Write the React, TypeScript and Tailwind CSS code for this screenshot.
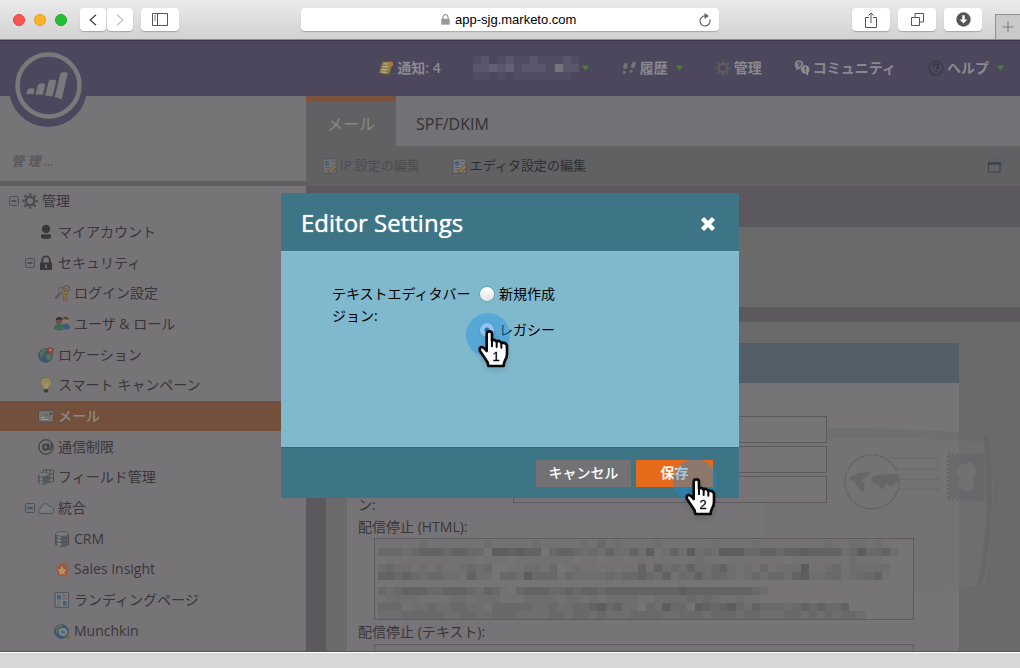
import { useState } from "react";
import type { ReactNode } from "react";

/* ---------- pixelated private text ---------- */

const TINTS = ["none", "#737173", "#6e6d6f", "#69686a", "#636264", "#5e5c5f"];

const BODY_ROWS = [
  "1111121111111211111211111213121111211111121111211111111211221210",
  "3332344434433055454403443232422425124252325553344344544442353342",
  "0111111111110111011111110110110111111112110111111101111111211100",
  "2322121211232300112213012111111141423242234212131222511231222220",
  "4434323322142203325333132222323343241324233212323324522331233410",
  "0000000000000000000000000000000000000000000000000000000000000000",
  "3234443344432431034443343443444444444544444444320000000000000000",
  "1222211112212221112222122121222211222232321121100000000000000000",
  "3331223223322133333223223345342203253315434532433323434334000000",
  "2223333322332233322223323323222333322333233323322233232323320000",
];

const NAV_TINTS = ["none", "#524d63", "#5b566b", "#656175", "#757281"];
const NAV_ROWS = ["1201211211121", "2232312221422", "1101011111110"];

function Mosaic({ rows, tints, className }: { rows: string[]; tints: string[]; className: string }) {
  const columns = rows[0].length;
  return (
    <svg
      className={className}
      viewBox={`0 0 ${columns} ${rows.length}`}
      preserveAspectRatio="none"
      shapeRendering="crispEdges"
      aria-hidden="true"
    >
      {rows.flatMap((row, y) =>
        [...row].map((level, x) =>
          level === "0" ? null : (
            <rect key={`${x}-${y}`} x={x} y={y} width="1" height="1" fill={tints[Number(level)]} />
          ),
        ),
      )}
    </svg>
  );
}

/* ---------- icons ---------- */

function Icon({ children, className = "size-4" }: { children: ReactNode; className?: string }) {
  return (
    <svg className={`${className} shrink-0`} viewBox="0 0 16 16" fill="none" aria-hidden="true">
      {children}
    </svg>
  );
}

const GearIcon = ({ color }: { color: string }) => (
  <Icon>
    <circle cx="8" cy="8" r="4.3" stroke={color} strokeWidth="2.6" />
    <circle cx="8" cy="8" r="6.7" stroke={color} strokeWidth="2.2" strokeDasharray="2.6 2.66" strokeDashoffset="1.3" />
  </Icon>
);

const UserIcon = () => (
  <Icon>
    <circle cx="8" cy="5" r="4.2" fill="#38383b" />
    <path d="M3 11c1.5-1.2 2.8-.5 5-.5s3.5-.7 5 .5v3q-5 2.200-10 0z" fill="#38383b" />
  </Icon>
);

const LockIcon = () => (
  <Icon>
    <path d="M4.2 8V5.200a3.800 3.800 0 0 1 7.600 0V8" stroke="#38383b" strokeWidth="1.8" />
    <rect x="2" y="7.500" width="12" height="7.500" rx=".8" fill="#38383b" />
    <path d="M7.200 9.500h1.600v3.500H7.200z" fill="#777478" />
  </Icon>
);

const KeysIcon = () => (
  <Icon>
    <path d="M1 13.500 7 7.500" stroke="#55565b" strokeWidth="1.8" />
    <path d="m2 12.500 1.800 1.400M4 10.500l1.500 1.200" stroke="#55565b" />
    <circle cx="7" cy="5" r="2.800" stroke="#66676b" strokeWidth="1.5" />
    <circle cx="12.500" cy="3.500" r="3" stroke="#505256" />
    <circle cx="11" cy="6.500" r="2.900" fill="#92754b" stroke="#5b4a34" strokeWidth=".6" />
    <path d="M10 9h2.400v6.500h-3.200V14h1v-1.300h-1v-1.200H10z" fill="#92754b" stroke="#5b4a34" strokeWidth=".5" />
    <circle cx="11" cy="5.800" r=".9" fill="#4b4032" />
  </Icon>
);

const UsersIcon = () => (
  <Icon>
    <circle cx="11.500" cy="4.300" r="3.200" fill="#8f7a63" />
    <path d="M8.400 3.500q.5-3 3.400-2.800 3.200.2 2.900 3.600-2.500-1.800-6.300-.8" fill="#55483c" />
    <path d="M7.500 12.500c.3-4.500 2-5 4-5s4.300.5 4.400 5q-4 2-8.400 0" fill="#3e5d7c" />
    <circle cx="5" cy="4.800" r="3.200" fill="#6e5040" />
    <path d="M1.700 4q.5-3.200 3.300-3.100 3.200.1 3.300 3.100-3-1.200-6.600 0" fill="#332d2c" />
    <path d="M0 13.300C.2 9 2 8 4.800 8s5 1 5.300 5.300q-5 2.700-10.100 0" fill="#3e6a51" />
  </Icon>
);

const GlobeBase = () => (
  <>
    <circle cx="7.500" cy="8.500" r="7" fill="#3b5878" stroke="#46505c" strokeWidth=".7" />
    <path d="M1.800 6q2-4.500 5.700-4.500l1.500 2L6 5l.5 2.200L4 8.500l.5 3Q1.500 10.500 1.800 6" fill="#567152" />
    <path d="m8 8 3-1.500 3 1.500q-.2 4-3 5.800L8.500 12z" fill="#567152" />
  </>
);

const LocationIcon = () => (
  <Icon>
    <GlobeBase />
    <circle cx="12.700" cy="3.300" r="3.200" fill="#8f4543" />
    <circle cx="12.500" cy="3" r="1.200" fill="#a97a78" />
  </Icon>
);

const MunchkinIcon = () => (
  <Icon>
    <GlobeBase />
    <circle cx="9" cy="9" r="3.200" fill="#566f84" stroke="#94989b" strokeWidth="1.200" />
    <path d="m11.500 11.500 3.500 4" stroke="#6b5f4b" strokeWidth="2" />
  </Icon>
);

const BulbIcon = () => (
  <Icon>
    <path d="M8 .3a5.600 5.600 0 0 0-5.700 5.600c0 2.900 3 3.700 3.100 6.300h5.200c.1-2.600 3.100-3.400 3.100-6.300A5.600 5.600 0 0 0 8 .3" fill="#938b5e" stroke="#6b6448" strokeWidth=".7" />
    <path d="M6.500 6.500 8 11l1.500-4.500" stroke="#aca47a" strokeWidth=".8" />
    <path d="M5.800 12.200h4.400v2.200q-2.200 2.500-4.400 0z" fill="#3d3e41" />
  </Icon>
);

const MailIcon = () => (
  <Icon>
    <rect x=".5" y="2.500" width="15" height="11.500" rx=".8" fill="#75726f" stroke="#524f4d" />
    <path d="M3 9.500h4M3 11.500h7" stroke="#9a9b9a" />
    <path d="M6 7.500q2-2 3.500 0" stroke="#55585b" />
    <path d="M11.500 4.500H14V7h-2.500z" fill="#4c4d3c" />
  </Icon>
);

const AtIcon = () => (
  <Icon>
    <circle cx="8" cy="8" r="7.200" fill="#69686b" stroke="#4a4a4d" strokeWidth="1.400" />
    <circle cx="8" cy="8" r="5.600" stroke="#858386" strokeWidth=".9" />
    <circle cx="7.600" cy="8" r="2.600" stroke="#3f3f42" strokeWidth="1.500" />
    <path d="M10.500 4.800v4.400q.5 2 2.200.8 1.600-2.500.3-5.300" stroke="#3f3f42" strokeWidth="1.300" />
  </Icon>
);

const Cylinder = () => (
  <>
    <path d="M1.500 3v10.500q6.500 4 13 0V3z" fill="#5a5e62" stroke="#434649" strokeWidth=".7" />
    <path d="M3.500 5v9.300q1.500.7 3.500.8V5z" fill="#7d8184" />
    <ellipse cx="8" cy="3" rx="6.500" ry="2.300" fill="#7b7f83" stroke="#4b4e51" strokeWidth=".7" />
    <path d="M1.500 6.500q6.500 3.200 13 0M1.500 10q6.500 3.200 13 0" stroke="#46494c" strokeWidth=".8" />
  </>
);

const DatabaseIcon = () => (
  <Icon>
    <Cylinder />
  </Icon>
);

const FieldIcon = () => (
  <Icon>
    <path d="M5 1h10.500v12H5zM8.500 1v12M12 1v12M5 5h10.500M5 9h10.500" fill="#7b797c" stroke="#4c4c4f" />
    <g transform="translate(-1 3.200) scale(.78)">
      <Cylinder />
    </g>
  </Icon>
);

const CloudIcon = () => (
  <Icon>
    <path d="M3.600 13.700C-.7 13.500-.4 8.700 3 8.500 3 3.500 8.800 1.700 11 6.100c5.300-.3 6.500 7 1.500 7.600z" fill="#75797d" stroke="#4d5054" strokeWidth=".9" />
    <path d="M3 9.800q2.500-1 4 1M11 7.500q-2 .3-2.300 1.800" stroke="#93979b" strokeWidth=".8" />
  </Icon>
);

const FlameIcon = () => (
  <Icon>
    <path d="m8 14.500-5 1.500.8-4.500L.3 7.700l3.100.2-1.600-5 3.200 3L5.500.6l2.300 3.600L10.500 0l.3 5.500L14.200 2l-1 5.500 2.700.4-3 3.600.8 4.500z" fill="#9c5840" />
    <path d="m8 12.700-3 1.300.6-3.200-2.300-2.300 3-.3L8 4.500l1.700 3.700 3 .4-2.300 2.400.6 3z" fill="#b5925a" />
  </Icon>
);

const PageArt = () => (
  <>
    <path d="M1 .8h13.500v14.400H1z" fill="#807f82" stroke="#515356" />
    <path d="M3 3h4v4.500H3zM9 9h3.700v4.500H9z" fill="#41617e" />
    <path d="M8.500 3.500h4.300M8.500 6.500h2" stroke="#5d5d60" strokeWidth="1.300" />
    <path d="M11 6.500h2" stroke="#83554f" strokeWidth="1.300" />
    <path d="M3 9.500h4M3 11.500h4M3 13.300h3" stroke="#716a51" />
  </>
);

const PageIcon = () => (
  <Icon>
    <PageArt />
  </Icon>
);

const EditPageIcon = () => (
  <Icon>
    <path d="M1 .8h13v14.400H1z" fill="#7c7b7e" stroke="#515356" />
    <path d="M3 3h4v4.500H3z" fill="#41617e" />
    <path d="M8.500 3.500h4M8.500 6.500h2M3 9.500h5M3 12h4" stroke="#59595c" strokeWidth="1.200" />
    <path d="m6.300 15.700.9-3.500L13.800 6 16 8.300l-6.500 6.400z" fill="#8b784c" stroke="#4a4338" strokeWidth=".7" />
    <path d="m12.900 6.900 1-1L16 8.200l-1 1z" fill="#7b5355" />
  </Icon>
);

const NoteIcon = () => (
  <Icon>
    <path d="M4.500 1.200h10.800L12 13q-1 2-3 1.800L.5 13z" fill="#8d7a4b" stroke="#55492f" strokeWidth=".7" />
    <path d="m5.500 3.700 5 .4M4.700 6.500l5.500.4M4 9.400l5.500.4M3.200 12l5 .4" stroke="#bdb794" strokeWidth="1.100" />
    <circle cx="12.500" cy="4.200" r="2.600" fill="#a3793d" />
  </Icon>
);

const FootIcon = () => (
  <Icon>
    <g fill="#71757a" stroke="#3b3a44" strokeWidth=".5">
      <path d="M4.500 2.500C6.500 2 7.500 4 6.800 6.500L5.800 9.500 1.800 9Q1.500 3 4.500 2.500M1.700 10.400l3.800.5q-.8 4.300-2.700 3.800-1.800-.5-1.100-4.300" />
      <path d="M13 1c2.200 0 2.900 2.300 1.600 4.500L13 9 9.300 7.700Q10.400 1.200 13 1M9.200 9.100l3.200 1.200q-1.700 3.900-3.400 3-1.400-.8.200-4.200" />
    </g>
  </Icon>
);

const CommunityIcon = () => (
  <Icon>
    <circle cx="5" cy="4.700" r="4.400" fill="#858388" />
    <path d="m2 7 .3 3.500L6 8z" fill="#858388" />
    <circle cx="11.300" cy="9.500" r="4.500" fill="#8e8c91" stroke="#4c475c" strokeWidth=".6" />
    <path d="m11.500 13 2.500 3 .3-4.500z" fill="#8e8c91" />
    <path d="M3.500 3.700q1.700-2 3-.3 0 1.200-1.500 1.800v1.300" stroke="#4c475c" strokeWidth="1.300" />
    <path d="M11.300 7v3.200m0 1v1" stroke="#4c475c" strokeWidth="1.500" />
  </Icon>
);

const HelpIcon = () => (
  <Icon>
    <circle cx="8" cy="8" r="7" stroke="#3a3842" strokeWidth="1.100" />
    <path d="M5.500 6.300Q5.700 4 8 4t2.500 2.200c0 1.700-2.400 1.800-2.400 3.600" stroke="#3a3842" strokeWidth="1.700" />
    <path d="M7.200 11h1.800v1.700H7.200z" fill="#3a3842" />
  </Icon>
);

const Caret = () => (
  <svg className="h-[6px] w-[7px] shrink-0" viewBox="0 0 7 6" aria-hidden="true">
    <path d="M0 .5h7L3.500 6z" fill="#4a7a3d" />
  </svg>
);

const WindowsIcon = () => (
  <Icon>
    <path d="M4 1.500h11V10h-2" stroke="#4b6374" strokeWidth="2" />
    <path d="M1.500 4.700h11.500V14H1.500z" fill="#626264" stroke="#434347" strokeWidth="1.200" />
    <path d="M1 4h12.500v2.800H1z" fill="#434347" />
  </Icon>
);

const Logo = () => (
  <svg className="absolute top-px left-[9px] size-[78px] overflow-visible" viewBox="0 0 78 78" aria-hidden="true">
    <circle cx="39" cy="46" r="39" fill="#4c475c" />
    <circle cx="39.500" cy="43.500" r="31" fill="none" stroke="#7b787c" strokeWidth="4.500" />
    <g fill="#7b787c">
      <path d="m17 52 1.500-4q.7-1.700 2.200-1.700H24q1.800 0 1.400 1.500l-1 4.400z" />
      <path d="m26.500 52.500 2.200-8.800q.6-2.200 2.600-2.200h3.500q1.900 0 1.400 1.800l-2.400 9.500z" />
      <path d="m36.200 53.400 3.300-13.400q.5-2.200 2.800-2.200h3.300q1.900 0 1.400 1.800l-3.500 15z" />
      <path d="m45.700 55 5.300-22.300q.6-2.400 3-2.400h3.200q1.800 0 1.300 2L52.700 57.500q-3.500-1.800-7-2.500" />
    </g>
  </svg>
);

function Pointer({ step, className }: { step: number; className: string }) {
  return (
    <svg className={`pointer-events-none absolute h-10 w-8 overflow-visible drop-shadow-md ${className}`} viewBox="0 0 96 120" aria-hidden="true">
      <path
        d="M26 62V15q0-8 8-8t8 8v20q7-6 14 3 8-6 14 4 10-4 17 7v26q0 12-7 22-3 6-3 14H31q-1-12-9-21L6 66q-3-10 4-12 6-1 16 12z"
        fill="#fff"
        stroke="#0a0a0a"
        strokeWidth="8"
        strokeLinejoin="round"
      />
      <path d="M42 35v17M56 39v15M70 43v13" stroke="#0a0a0a" strokeWidth="6" strokeLinecap="round" />
      <text x="54" y="97" textAnchor="middle" fontSize="39" fill="#111" stroke="#111" strokeWidth="1" className="font-['Liberation_Sans',sans-serif]">
        {step}
      </text>
    </svg>
  );
}

function Envelope() {
  return (
    <svg className="absolute top-[84px] -right-[38px] h-[168px] w-[234px]" viewBox="0 0 234 168" fill="none" aria-hidden="true">
      <path d="M4 4Q110-3 226 8q10 70-4 150L170 165H10Q-2 90 4 4z" fill="#707172" fillOpacity=".5" />
      <path d="M4 4Q110-3 226 8v8Q120 6 4 14z" fill="#656667" fillOpacity=".3" />
      <path d="M223 8q9 80-6 150" stroke="#5f6061" strokeOpacity=".5" strokeWidth="5" />
      <g stroke="#606163" strokeOpacity=".7">
        <circle cx="109" cy="55" r="27" strokeWidth="1.500" strokeDasharray="30 2" />
        <path d="M128 31h48M132 42h44M136 52h40M136 62h40" />
      </g>
      <g fill="#606163" fillOpacity=".7">
        <path d="m86 51 9-5 12-1-3 5-6 3 4 4-2 9-5-6-4-5zM108 51l5-3 20-1 3 6-5 5-4 1-4-3-3 7-5-5-5-2z" />
        <path d="M186 28h34v44h-34z" fillOpacity=".5" />
      </g>
      <path d="M185 27h36v46h-36z" stroke="#606163" strokeOpacity=".7" strokeDasharray="2 2" strokeWidth="2" />
      <path d="m196 38 12-3 6 9-4 8 2 9-8 4-10-6 3-8-4-5z" fill="#707171" />
    </svg>
  );
}

/* ---------- browser frame ---------- */

const CHROME_BUTTON =
  "flex h-[23px] items-center justify-center rounded bg-white shadow-[0_1px_1px_rgba(0,0,0,0.22)]";

function BrowserBar() {
  return (
    <div className="grid h-10 shrink-0 grid-cols-[1fr_418px_1fr] items-center border-b border-[#8d8d90] bg-linear-to-b from-[#eaeaea] to-[#d2d2d2]">
      <div className="flex items-center">
        <div className="flex gap-[9px] pl-[13px]">
          <span className="size-3 rounded-full border border-[#e0443e] bg-[#fc5551]" />
          <span className="size-3 rounded-full border border-[#dfa023] bg-[#fdb32a]" />
          <span className="size-3 rounded-full border border-[#1aa52b] bg-[#22c034]" />
        </div>
        <div className="ml-[13px] flex gap-px">
          <button type="button" aria-label="Back" className={`${CHROME_BUTTON} w-[26px]`}>
            <svg className="h-3 w-2" viewBox="0 0 8 12" fill="none"><path d="M7 .7 1.200 6 7 11.300" stroke="#4a4a4a" strokeWidth="1.400" /></svg>
          </button>
          <button type="button" aria-label="Forward" className={`${CHROME_BUTTON} w-[26px]`}>
            <svg className="h-3 w-2" viewBox="0 0 8 12" fill="none"><path d="M1 .7 6.800 6 1 11.300" stroke="#c4c4c4" strokeWidth="1.400" /></svg>
          </button>
        </div>
        <button type="button" aria-label="Sidebar" className={`${CHROME_BUTTON} ml-2 w-[38px]`}>
          <svg className="h-[13px] w-4" viewBox="0 0 16 13" fill="none">
            <path d="M.5.5h15v12H.5zM5.500.5v12" stroke="#555" />
            <path d="M2 3h2M2 5h2M2 7h2" stroke="#777" />
          </svg>
        </button>
      </div>
      <div className="flex h-[23px] items-center rounded bg-white px-2 shadow-[0_1px_1px_rgba(0,0,0,0.22)]">
        <label className="flex flex-1 items-center justify-center gap-[5px] pl-4">
          <svg className="h-[11px] w-[9px]" viewBox="0 0 9 11" fill="none" aria-label="Secure">
            <path d="M2 5V3.200a2.500 2.500 0 0 1 5 0V5" stroke="#999" strokeWidth="1.200" />
            <path d="M.3 4.800h8.400v5.900H.3z" fill="#999" />
          </svg>
          <input
            type="text"
            readOnly
            value="app-sjg.marketo.com"
            className="w-[128px] bg-transparent font-['Liberation_Sans',Arial,sans-serif] text-[13px] text-black outline-none"
          />
        </label>
        <button type="button" aria-label="Reload">
          <svg className="h-[14px] w-3" viewBox="0 0 12 14" fill="none">
            <path d="M10.800 6.500A5 5 0 1 1 6.500 3" stroke="#666" strokeWidth="1.200" />
            <path d="M5.500 0v6L10 3z" fill="#666" />
          </svg>
        </button>
      </div>
      <div className="flex h-full items-center justify-end gap-2">
        <button type="button" aria-label="Share" className={`${CHROME_BUTTON} w-[38px]`}>
          <svg className="h-4 w-3" viewBox="0 0 12 16" fill="none"><path d="M4 5.500H.5v10h11v-10H8M6 11V1M3.500 3.500 6 1l2.500 2.500" stroke="#555" /></svg>
        </button>
        <button type="button" aria-label="Tabs" className={`${CHROME_BUTTON} w-[38px]`}>
          <svg className="size-[13px]" viewBox="0 0 13 13" fill="none"><path d="M.5 4.500h8v8h-8zM4 4.500v-4h8.500V9h-4" stroke="#555" /></svg>
        </button>
        <button type="button" aria-label="Downloads" className={`${CHROME_BUTTON} w-[38px]`}>
          <svg className="size-[15px]" viewBox="0 0 15 15"><circle cx="7.500" cy="7.500" r="7.200" fill="#555" /><path d="M6.300 3.200h2.400v4.300h2.600l-3.800 4-3.800-4h2.600z" fill="#fff" /></svg>
        </button>
        <button type="button" aria-label="New tab" className="ml-[5px] flex h-[25px] w-[25px] items-center justify-center self-end border-t border-l border-[#8f8f8f] bg-[#c9c9c9]">
          <svg className="size-3" viewBox="0 0 12 12"><path d="M6 .5v11M.5 6h11" stroke="#777" /></svg>
        </button>
      </div>
    </div>
  );
}

/* ---------- application header ---------- */

function TopNav() {
  const link = "flex items-center gap-[3px] text-sm font-semibold text-[#8b8990]";
  return (
    <header className="relative z-10 h-14 shrink-0 border-t border-[#3c384b] bg-[#4c475c]">
      <Logo />
      <nav className="flex h-full items-center justify-end gap-8 pr-4 pb-0.5">
        <a href="#notifications" className={link}><NoteIcon />通知: 4</a>
        <a href="#account" aria-label="Account" className="flex items-center gap-[3px]">
          <Mosaic rows={NAV_ROWS} tints={NAV_TINTS} className="h-6 w-[106px]" />
          <Caret />
        </a>
        <a href="#history" className={link}><FootIcon />履歴<span className="ml-[5px]"><Caret /></span></a>
        <a href="#admin" className={link}><GearIcon color="#5d5b60" />管理</a>
        <a href="#community" className={link}><CommunityIcon />コミュニティ</a>
        <a href="#help" className={link}><HelpIcon />ヘルプ<span className="ml-[5px]"><Caret /></span></a>
      </nav>
    </header>
  );
}

/* ---------- sidebar ---------- */

type Node = { label: string; level: 0 | 1 | 2; icon: ReactNode; open?: boolean; selected?: boolean };

const NODES: Node[] = [
  { label: "管理", level: 0, icon: <GearIcon color="#4d4d50" />, open: true },
  { label: "マイアカウント", level: 1, icon: <UserIcon /> },
  { label: "セキュリティ", level: 1, icon: <LockIcon />, open: true },
  { label: "ログイン設定", level: 2, icon: <KeysIcon /> },
  { label: "ユーザ & ロール", level: 2, icon: <UsersIcon /> },
  { label: "ロケーション", level: 1, icon: <LocationIcon /> },
  { label: "スマート キャンペーン", level: 1, icon: <BulbIcon /> },
  { label: "メール", level: 1, icon: <MailIcon />, selected: true },
  { label: "通信制限", level: 1, icon: <AtIcon /> },
  { label: "フィールド管理", level: 1, icon: <FieldIcon /> },
  { label: "統合", level: 1, icon: <CloudIcon />, open: true },
  { label: "CRM", level: 2, icon: <DatabaseIcon /> },
  { label: "Sales Insight", level: 2, icon: <FlameIcon /> },
  { label: "ランディングページ", level: 2, icon: <PageIcon /> },
  { label: "Munchkin", level: 2, icon: <MunchkinIcon /> },
];

const INDENT = ["pl-[9px]", "pl-[25px]", "pl-[41px]"];

function Sidebar() {
  return (
    <aside className="w-[306px] shrink-0 bg-[#777478]">
      <div className="flex h-[85px] items-end px-[11px] pb-[10px]">
        <input
          type="text"
          aria-label="検索"
          placeholder="管 理 ..."
          className="w-full bg-transparent text-[13px] font-semibold italic outline-none placeholder:text-[#5a585c]"
        />
      </div>
      <div className="h-[5px] bg-[#5f5e61]" />
      <ul className="grid h-[460px] auto-rows-fr">
        {NODES.map((node) => (
          <li key={node.label} className={node.selected ? "bg-[#73503c]" : ""}>
            <a
              href="#tree"
              className={`flex h-full items-center text-sm ${INDENT[node.level]} ${node.selected ? "font-medium text-[#8f8885]" : "text-[#37363a]"}`}
            >
              <span className="mr-[3px] flex size-[10px] shrink-0">
                {node.open && (
                  <svg className="size-full" viewBox="0 0 10 10">
                    <rect x=".5" y=".5" width="9" height="9" rx="1" fill="#717379" stroke="#4b505b" />
                    <path d="M2.500 5h5" stroke="#2b2e35" />
                  </svg>
                )}
              </span>
              {node.icon}
              <span className="ml-1">{node.label}</span>
            </a>
          </li>
        ))}
      </ul>
    </aside>
  );
}

/* ---------- main column ---------- */

function MainColumn() {
  const tool = "flex items-center gap-[2px] text-[13px]";
  const field = "block h-[27px] w-full border border-[#5c5a5d] bg-[#777478] outline-none";
  return (
    <main className="flex min-w-0 flex-1 flex-col bg-[#6a6a6b]">
      <div role="tablist" className="flex h-[50px] shrink-0 bg-[#727175] text-base">
        <button type="button" role="tab" aria-selected="true" className="w-[90px] border-t-[5px] border-[#7b523e] bg-[#616163] text-[#89888b]">
          メール
        </button>
        <button type="button" role="tab" aria-selected="false" className="px-5 pt-[6px] text-[#333236]">
          SPF/DKIM
        </button>
      </div>
      <div className="flex h-10 shrink-0 items-center gap-8 bg-[#616163] pr-[17px] pl-4">
        <button type="button" disabled className={`${tool} text-[#4c4b4e]`}><span className="opacity-70"><EditPageIcon /></span>IP 設定の編集</button>
        <button type="button" className={`${tool} text-[#2f2e31]`}><EditPageIcon />エディタ設定の編集</button>
        <button type="button" aria-label="Windows" className="ml-auto"><WindowsIcon /></button>
      </div>
      <div className="h-[41px] shrink-0 bg-[#5c595e]" />
      <div className="h-20 shrink-0" />
      <div className="h-[15px] shrink-0 bg-[#5c595e]" />
      <div className="flex flex-1 border-l-[20px] border-[#5c595e] pt-[21px] pr-[61px] pl-[21px]">
        <section className="relative flex-1 bg-[#777478]">
          <div className="h-10 bg-[#535f67]" />
          <Envelope />
          <form className="relative pt-[33px] pr-[45px] pl-[11px] text-sm text-[#37363a]">
            <div className="mr-[87px] ml-[155px] flex flex-col gap-[3px]">
              <input aria-label="1" className={field} />
              <input aria-label="2" className={field} />
              <input aria-label="3" className={field} />
            </div>
            <p className="-mt-2 leading-5">ン:</p>
            <label htmlFor="html" className="block leading-[23px]">配信停止 (HTML):</label>
            <div className="relative ml-4">
              <textarea id="html" className="block h-[82px] w-full resize-none border border-[#5c5a5d] bg-[#777478] outline-none" />
              <Mosaic rows={BODY_ROWS} tints={TINTS} className="pointer-events-none absolute top-0.5 left-1 h-[79px] w-[520px]" />
            </div>
            <label htmlFor="text" className="block leading-6">配信停止 (テキスト):</label>
            <textarea id="text" className="ml-4 block h-[82px] w-[calc(100%-16px)] resize-none border border-[#5c5a5d] bg-[#777478] outline-none" />
          </form>
        </section>
      </div>
    </main>
  );
}

/* ---------- dialog ---------- */

function EditorDialog() {
  const [version, setVersion] = useState("legacy");
  const radio =
    "size-[14px] shrink-0 appearance-none rounded-full bg-linear-to-b from-white to-[#e4e4e4] shadow-[0_0_1px_1px_rgba(70,100,115,0.25)] checked:bg-[radial-gradient(circle,#24507c_0_2px,#f2f7fc_3px)]";
  return (
    <div className="absolute inset-0 z-20 flex items-start justify-center pt-[193px]">
      <div role="dialog" aria-labelledby="dialog-title" className="relative w-[458px] bg-[#3d7587]">
        <div className="flex h-[58px] items-center justify-between pr-[23px] pl-5">
          <h2 id="dialog-title" className="pt-0.5 text-2xl font-medium text-white text-shadow-[0_0_1px_#fff]">Editor Settings</h2>
          <button type="button" aria-label="Close">
            <svg className="mt-1 size-4" viewBox="0 0 16 16"><path d="m2.500 2.500 11 11M13.500 2.500l-11 11" stroke="#fff" strokeWidth="4.500" /></svg>
          </button>
        </div>
        <fieldset className="h-[196px] border-t border-[#8bc3d6] bg-[#80b9ce] pt-[31px] pl-[51px] text-sm leading-[22px] text-black">
          <div className="flex gap-2">
            <div className="w-[140px]">テキストエディタバージョン:</div>
            <div className="flex flex-col gap-[14px]">
              <label className="flex items-center gap-[5px]">
                <input type="radio" name="version" className={radio} checked={version === "new"} onChange={() => setVersion("new")} />
                新規作成
              </label>
              <label className="flex items-center gap-[5px]">
                <input type="radio" name="version" className={radio} checked={version === "legacy"} onChange={() => setVersion("legacy")} />
                レガシー
              </label>
            </div>
          </div>
        </fieldset>
        <div className="flex h-[51px] items-center justify-end gap-[5px] border-t border-[#35697a] pr-[26px] text-sm font-medium text-white">
          <button type="button" className="h-[27px] w-[95px] bg-[#727274]">キャンセル</button>
          <button type="button" className="h-[27px] w-[77px] bg-[#e66a1a] font-bold">保存</button>
        </div>
        <span className="pointer-events-none absolute top-[120px] left-[185px] size-11 rounded-full bg-[#2e96e0]/50" />
        <Pointer step={1} className="top-[136px] left-[197px]" />
        <span className="pointer-events-none absolute top-[266px] left-[392px] size-11 rounded-full bg-[#1e8ad2]/45" />
        <Pointer step={2} className="top-[284px] left-[404px]" />
      </div>
    </div>
  );
}

export default function App() {
  return (
    <div className="relative flex h-screen flex-col overflow-hidden font-['Open_Sans','Noto_Sans_CJK_JP',sans-serif]">
      <BrowserBar />
      <TopNav />
      <div className="flex min-h-0 flex-1 overflow-hidden">
        <Sidebar />
        <MainColumn />
      </div>
      <div className="z-10 h-4 shrink-0 border-t border-white bg-[#d7d7d7] shadow-[0_-1px_0_#555]" />
      <EditorDialog />
    </div>
  );
}
